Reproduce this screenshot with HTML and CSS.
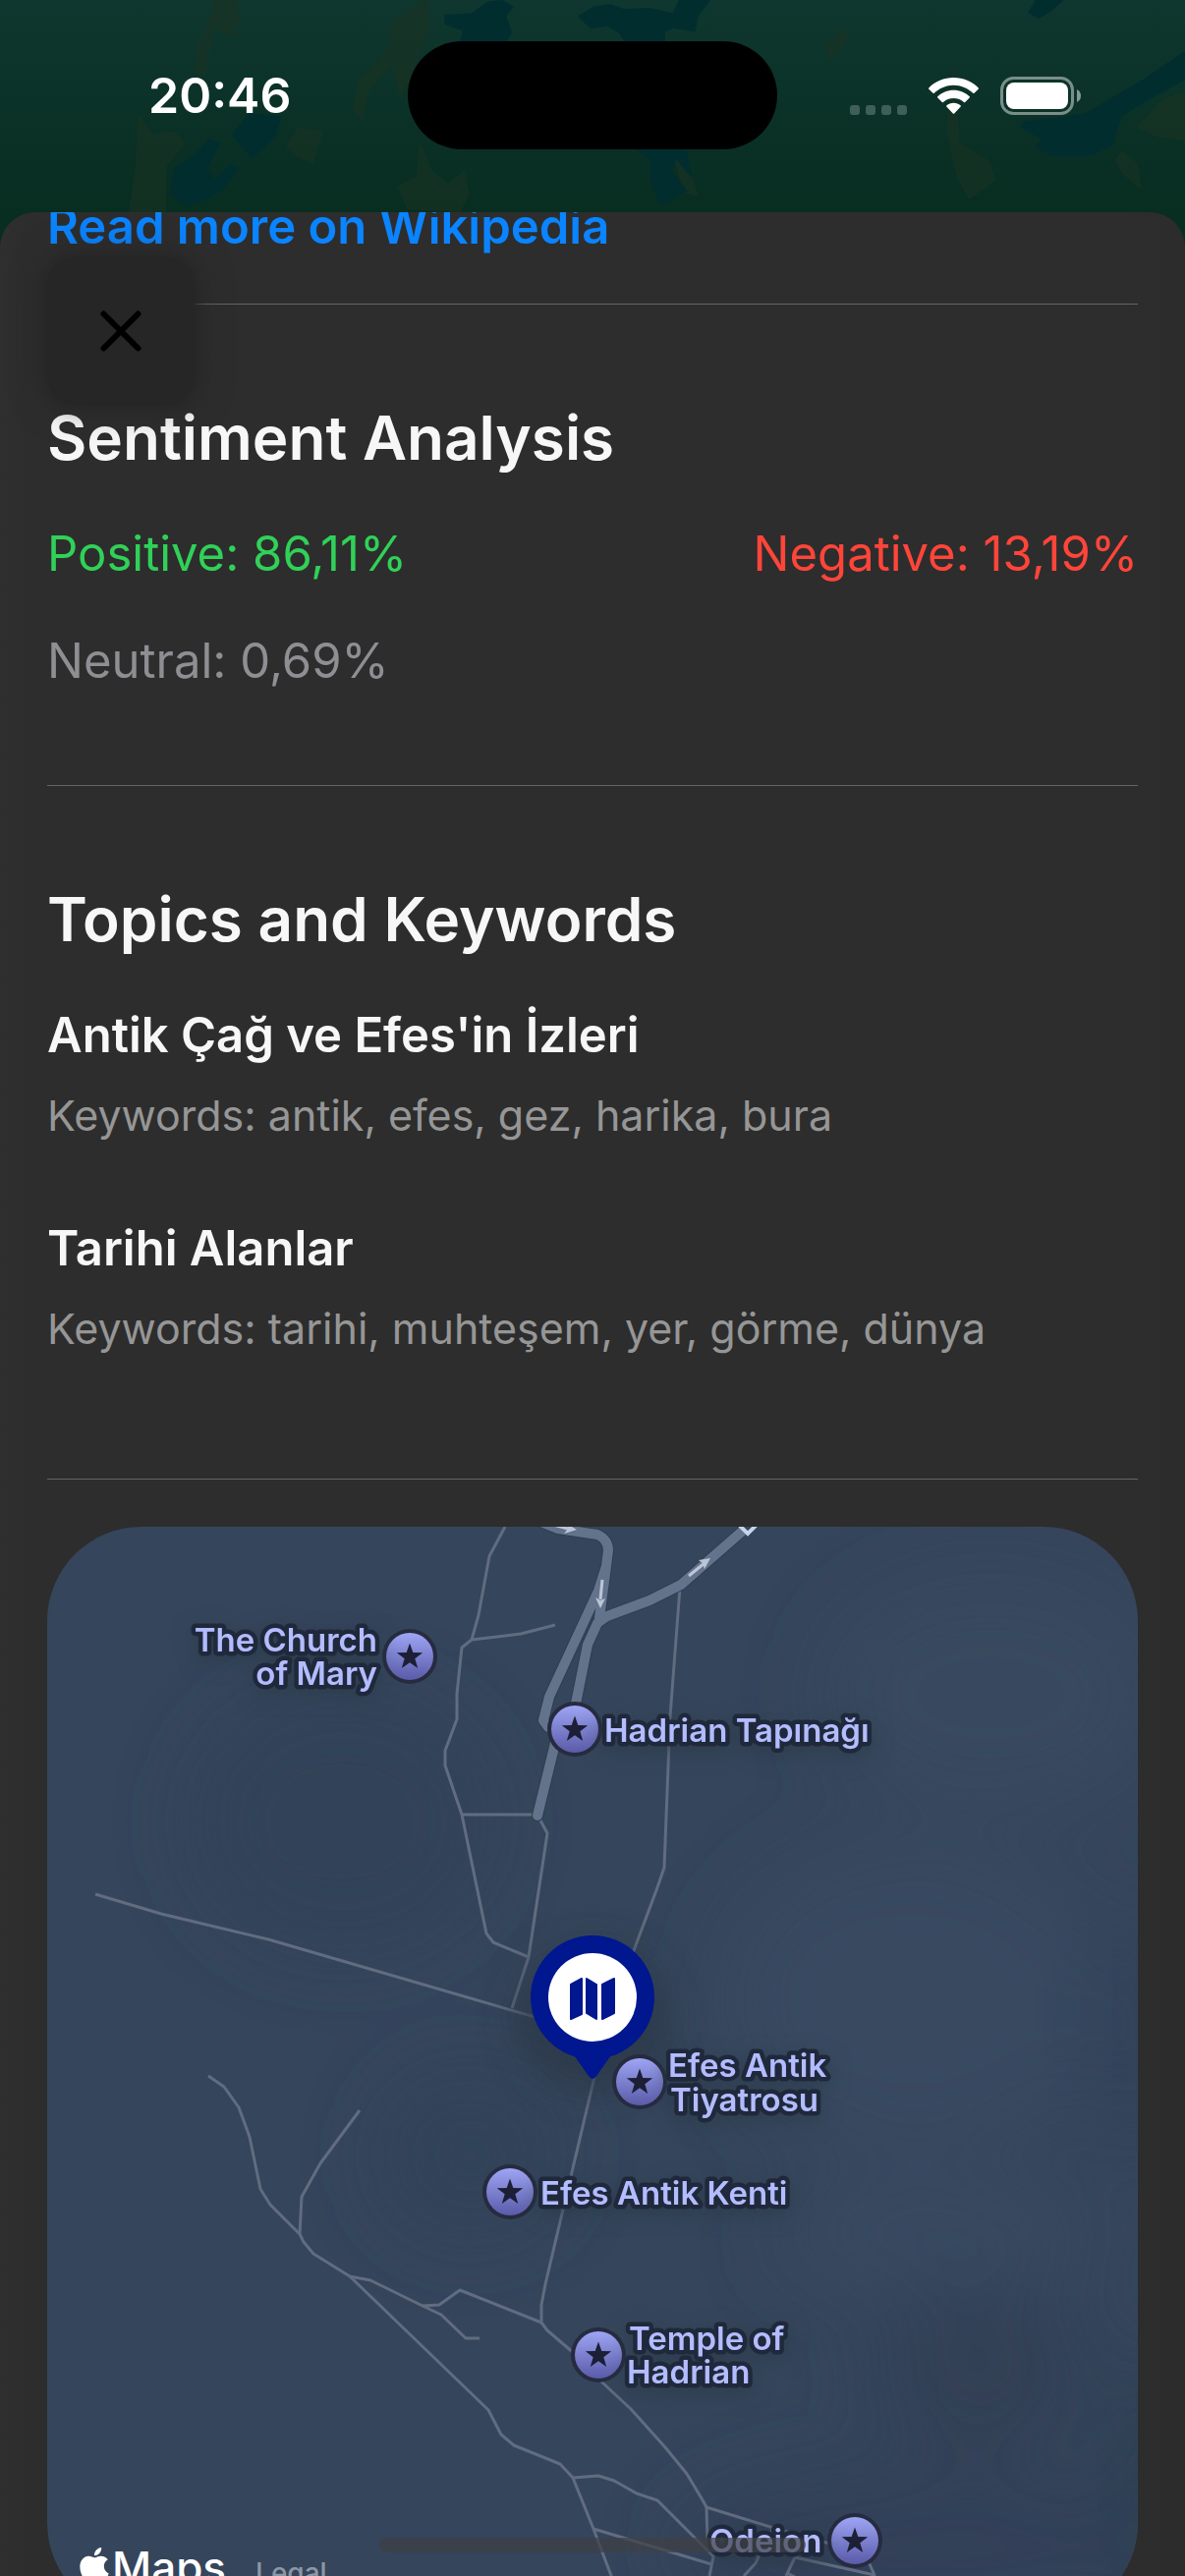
FILE: index.html
```html
<!DOCTYPE html>
<html lang="en">
<head>
<meta charset="utf-8">
<meta name="viewport" content="width=device-width, initial-scale=1">
<title>Efes</title>
<link rel="stylesheet" href="styles.css">
</head>
<body>
<div class="app">
  <header class="status-bar">
    <svg class="terrain" viewBox="0 0 1568 700" preserveAspectRatio="none" aria-hidden="true">
      <g fill="#1a3323" opacity=".6">
        <path d="M283 0h30l6 60-12 60-22-40-6 60-8 100-14-20 4-90 12-50z"/>
        <path d="M560 0h8v90l-20 130-18 80-12-100-30 80-8 90-14-40 10-90 22-50 20-60-2-60z"/>
        <path d="M1118 80l4 40-16 50-10 20-4-50z"/>
        <path d="M182 350l20 60 30-10 12 40-24 70v140h-50l10-140z"/>
        <path d="M395 390l33 10-14 100-20-20-16-30z"/>
        <path d="M555 430l16 90 22 40 22-40 6 70-12 60-70-10-14-70 26-30z"/>
        <path d="M1262 180l8 260 38 50 10 60-36 60-14-60-16-150z"/>
        <path d="M1540 300l28-20v150l-34-10-30-30zM1485 460l20 40 6 80-26-50-10-40z"/>
        <path d="M892 480l24 60 8 60-20-10z"/>
      </g>
      <g fill="#012d30" opacity=".9">
        <path d="M588 45l36-5 22-36 20-4 14 20-10 30 8 50-18 60h-55l7-65-24-20z"/>
        <path d="M764 50l20-30 24-8 18 16 34-4 30 16 8-40h42l-16 50-4 48-30-12-10 14v90l-40-6-20-80-16-24-22 8z"/>
        <path d="M1370 0h38l-20 40-14 18-14-20z"/>
        <path d="M1568 155v90l-44 55-40 56-12 90-30 32h-50l-22-28 8-24-28-36 4-20 54-14 30-12 44-60 30-40z"/>
        <path d="M330 345l42 10-6 60-32 72-28-76z"/>
        <path d="M275 424l18 10-18 80 10 38 18-48 14 10-22 64-20 30-28 24-22-40 6-80 28-40z"/>
        <path d="M840 456h68l8 90-22-60-4 40 20 60-36 42-12-66-2-70z"/>
      </g>
    </svg>
    <time class="clock">20:46</time>
    <div class="island"></div>
    <div class="indicators">
      <svg class="cell" viewBox="0 0 58 10" aria-label="No signal">
        <rect width="10" height="10" rx="3"/><rect x="16" width="10" height="10" rx="3"/><rect x="32" width="10" height="10" rx="3"/><rect x="48" width="10" height="10" rx="3"/>
      </svg>
      <svg class="wifi" viewBox="0 0 51 38" aria-label="Wi-Fi">
        <path d="M25.500 0C35 0 44.500 4 50.700 10.400q.6.700 0 1.300l-4.200 4.100q-.7.600-1.300 0C40 10.800 33 7.800 25.500 7.800S11 10.800 5.800 15.800q-.6.600-1.300 0L.3 11.700q-.6-.6 0-1.300C6.500 4 16 0 25.500 0z"/>
        <path d="M25.500 12.700c6.200 0 12 2.400 16.200 6.600q.6.600 0 1.200l-4.500 4.400q-.6.600-1.200 0c-2.800-2.600-6.500-4-10.500-4s-7.700 1.400-10.500 4q-.6.600-1.200 0l-4.500-4.400q-.6-.6 0-1.200c4.200-4.200 10-6.600 16.200-6.600z"/>
        <path d="M25.500 25.700c2.700 0 5.200 1 7.200 2.700q.6.600 0 1.200l-6.500 6.900q-.7.700-1.400 0l-6.500-6.900q-.6-.6 0-1.200c2-1.700 4.500-2.700 7.200-2.700z"/>
      </svg>
      <svg class="battery" viewBox="0 0 82 39" aria-label="Battery full">
        <rect x="1.500" y="1.500" width="72" height="36" rx="12" fill="none" stroke="#fff" stroke-opacity=".45" stroke-width="3"/>
        <rect x="6" y="6" width="63" height="27" rx="8" fill="#fff"/>
        <path d="M78 13q4 2 4 6.500T78 26z" fill="#fff" fill-opacity=".5"/>
      </svg>
    </div>
  </header>

  <main class="sheet">
    <button class="close" type="button" aria-label="Close">
      <svg viewBox="0 0 42 42" aria-hidden="true"><path d="M3.500 3.500l35 35M38.500 3.500l-35 35"/></svg>
    </button>

    <div class="content">
      <a class="wiki-link" href="#wikipedia">Read more on Wikipedia</a>
      <hr>
      <section class="section">
        <h2>Sentiment Analysis</h2>
        <div class="scores">
          <span class="positive">Positive: 86,11%</span>
          <span class="negative">Negative: 13,19%</span>
        </div>
        <p class="neutral">Neutral: 0,69%</p>
      </section>
      <hr>
      <section class="section">
        <h2>Topics and Keywords</h2>
        <article class="topic">
          <h3>Antik Çağ ve Efes'in İzleri</h3>
          <p>Keywords: antik, efes, gez, harika, bura</p>
        </article>
        <article class="topic">
          <h3>Tarihi Alanlar</h3>
          <p>Keywords: tarihi, muhteşem, yer, görme, dünya</p>
        </article>
      </section>
      <hr>

      <div class="map">
        <svg class="map-canvas" viewBox="0 0 1110 1110" role="img" aria-label="Map of Efes">
          <defs>
            <linearGradient id="pin-fill" x1="0" y1="0" x2="0" y2="1">
              <stop offset="0" stop-color="#9ea5f4"/><stop offset="1" stop-color="#5a5ba9"/>
            </linearGradient>
            <filter id="soft" x="-50%" y="-50%" width="200%" height="200%"><feGaussianBlur stdDeviation="40"/></filter>
            <filter id="halo" x="-50%" y="-50%" width="200%" height="200%"><feGaussianBlur stdDeviation="18"/></filter>
            <g id="poi">
              <circle r="28" fill="#262b3f"/>
              <circle r="24" fill="url(#pin-fill)"/>
              <path d="M0-13.500l3.300 9.500 9.900.2-7.900 6.100 2.900 9.600L0 6.200l-8.200 5.700 2.900-9.600-7.900-6.100 9.900-.2z" fill="#1c1f36"/>
            </g>
          </defs>
          <rect width="1110" height="1110" fill="#35455b"/>
          <g filter="url(#soft)">
            <ellipse cx="300" cy="300" rx="150" ry="130" fill="#334359"/>
            <ellipse cx="960" cy="170" rx="170" ry="120" fill="#38495f"/>
            <ellipse cx="880" cy="480" rx="200" ry="160" fill="#384960"/>
            <ellipse cx="900" cy="720" rx="160" ry="60" fill="#384a60"/>
            <ellipse cx="950" cy="860" rx="110" ry="90" fill="#304055"/>
            <ellipse cx="900" cy="1040" rx="260" ry="80" fill="#314158"/>
            <ellipse cx="1110" cy="520" rx="60" ry="120" fill="#30435a"/>
            <ellipse cx="430" cy="640" rx="90" ry="80" fill="#334359"/>
            <ellipse cx="1130" cy="1000" rx="60" ry="150" fill="#2f3f52"/>
          </g>

          <g class="trail">
            <path d="M466 0L450 30 439 90 432 115 422 123 417 170V196L405 228V243L422 293 447 414 454 423 490 438"/>
            <path d="M432 115L482 109 517 100"/>
            <path d="M422 293H499"/>
            <path d="M501 297L509 312 490 438 473 490"/>
            <path d="M49 374L116 394 225 420 510 503"/>
            <path d="M644 62L634 193 628 347 620 370 590 450"/>
            <path d="M557 560L507 771 503 792V810L509 818 537 842 566 872 594 898 629 937 651 964 666 989 671 998 672 1034 678 1048 674 1068"/>
            <path d="M164 559L180 570 195 591 206 621 217 674 227 690 257 720 261 728 271 740 308 763 449 899 462 924 475 935 522 954 535 968 556 1020 590 1110"/>
            <path d="M318 594L278 648 259 682 257 720"/>
            <path d="M308 763L329 767 382 793 401 802 426 826H440"/>
            <path d="M382 793L399 792 420 777 503 810"/>
            <path d="M535 968L561 966 577 971 600 984 621 991 678 1048"/>
            <path d="M556 1020L676 1056"/>
            <path d="M671 998L739 1019 800 1036"/>
            <path d="M739 1019L726 1044 721 1055 709 1068"/>
            <path d="M761 1049L752 1068M761 1049L842 1067 832 1045M753 1065L761 1069"/>
          </g>

          <g class="road road-edge">
            <path d="M505-4L520 2 560 8Q571 13 571 24L569 40 561 65 511 173 505 197 510 204M569 40L562 93"/>
            <path d="M708 4L645 59 613 75 570 91 560 98 550 120 538 180M520 208L499 294"/>
          </g>
          <g class="road">
            <path d="M505-4L520 2 560 8Q571 13 571 24L569 40 561 65 511 173 505 197 510 204M569 40L562 93"/>
            <path d="M708 4L645 59 613 75 570 91 560 98 550 120 538 180M520 208L499 294"/>
          </g>
          <g class="arrows">
            <path d="M565 54L563 74"/><path class="head" d="M558 72l5 3 5-2-5 10z"/>
            <path d="M653 50L669 37"/><path class="head" d="M663 34l4 3 2 6 6-11z"/>
            <path d="M515-2L530 2"/><path class="head" d="M529-3l1 5-4 5 13-4z"/>
          </g>
          <path d="M703-3l10 10 10-10" fill="#35455c" stroke="#c5d3ec" stroke-width="4"/>

          <ellipse cx="555" cy="500" rx="80" ry="76" fill="#2b3946" opacity=".75" filter="url(#halo)"/>

          <use href="#poi" x="369" y="132"/>
          <use href="#poi" x="537" y="206"/>
          <use href="#poi" x="603" y="565"/>
          <use href="#poi" x="471" y="677"/>
          <use href="#poi" x="561" y="843"/>
          <use href="#poi" x="822" y="1032"/>

          <g class="label">
            <text text-anchor="end"><tspan x="336" y="127">The Church</tspan><tspan x="336" y="161">of Mary</tspan></text>
            <text x="567" y="219">Hadrian Tapınağı</text>
            <text><tspan x="632" y="560">Efes Antik</tspan><tspan x="634" y="595">Tiyatrosu</tspan></text>
            <text x="502" y="690">Efes Antik Kenti</text>
            <text><tspan x="592" y="838">Temple of</tspan><tspan x="590" y="872">Hadrian</tspan></text>
            <text x="674" y="1044">Odeion</text>
          </g>

          <g>
            <path d="M536 538H574L559 559Q555 565 551 559z" fill="#00178f"/>
            <circle cx="555" cy="479" r="63" fill="#00178f"/>
            <circle cx="555" cy="479" r="45" fill="#fff"/>
            <g fill="#00178f" stroke="#00178f" stroke-width="2" stroke-linejoin="round">
              <path d="M533 466l11-6v36l-11 5z"/><path d="M549 460l10 6v35l-10-6z"/><path d="M565 466l12-6v35l-12 6z"/>
            </g>
          </g>
        </svg>
        <div class="attribution">
          <svg viewBox="0 0 24 24" aria-hidden="true"><path d="M12.152 6.896c-.948 0-2.415-1.078-3.960-1.040-2.040.027-3.910 1.183-4.961 3.014-2.117 3.675-.546 9.103 1.519 12.090 1.013 1.454 2.208 3.090 3.792 3.039 1.520-.065 2.090-.987 3.935-.987 1.831 0 2.350.987 3.960.948 1.637-.026 2.676-1.480 3.676-2.948 1.156-1.688 1.636-3.325 1.662-3.415-.039-.013-3.182-1.221-3.220-4.857-.026-3.040 2.480-4.494 2.597-4.559-1.429-2.090-3.623-2.324-4.390-2.376-2-.156-3.675 1.090-4.610 1.090zM15.530 3.830c.843-1.012 1.400-2.427 1.245-3.830-1.207.052-2.662.805-3.532 1.818-.780.896-1.454 2.338-1.273 3.714 1.338.104 2.715-.688 3.559-1.701"/></svg>
          <span class="brand">Maps</span>
          <a href="#legal">Legal</a>
        </div>
      </div>
    </div>
  </main>
  <div class="home-indicator"></div>
</div>
</body>
</html>
```
FILE: styles.css
```css
* {
  box-sizing: border-box;
  margin: 0;
}

body {
  background: #072d22;
  color: #f7f7f7;
  font-family: Inter, "Liberation Sans", sans-serif;
  font-size: 49px;
  line-height: 61px;
}

.app {
  position: relative;
  display: flex;
  flex-direction: column;
  height: 100vh;
  overflow: hidden;
  background: linear-gradient(#0f372f, #082d21 216px, #082d21);
}

/* Status bar */
.status-bar {
  display: grid;
  grid-template-columns: 1fr 376px 1fr;
  align-items: center;
  height: 216px;
  padding-bottom: 22px;
  flex: none;
}

.status-bar > * {
  position: relative;
}

.status-bar > .terrain {
  position: absolute;
  top: 0;
  left: 0;
  width: 100%;
  height: 233px;
}

.clock {
  padding-left: 151px;
  color: #fff;
  font-size: 50px;
  font-weight: 600;
}

.island {
  height: 110px;
  border-radius: 55px;
  background: #000;
}

.indicators {
  display: flex;
  justify-content: flex-end;
  align-items: flex-end;
  gap: 22px;
  padding-right: 106px;
}

.cell {
  width: 58px;
  height: 10px;
  fill: #3f5f58;
}

.wifi {
  width: 51px;
  height: 38px;
  fill: #fff;
}

.battery {
  width: 82px;
  height: 39px;
}

/* Sheet */
.sheet {
  position: relative;
  flex: 1;
  min-height: 0;
  overflow: hidden;
  border-radius: 36px 36px 0 0;
  background: linear-gradient(90deg, #2f2f2f, #2d2d2d 24px, #2d2d2d 1140px, #2c2c2d);
}

.close {
  position: absolute;
  z-index: 1;
  top: 46px;
  left: 48px;
  display: grid;
  place-items: center;
  width: 150px;
  height: 150px;
  padding: 0;
  border: 0;
  border-radius: 30px;
  background: #262626;
  box-shadow: 0 0 12px 2px #262626, 0 0 36px #26262699;
}

.close svg {
  width: 42px;
  height: 42px;
  stroke: #000;
  stroke-width: 6;
  stroke-linecap: round;
}

.content {
  display: flex;
  flex-direction: column;
  gap: 48px;
  margin-top: -16px;
  padding: 0 48px 48px;
}

.wiki-link {
  color: #0a84ff;
  font-weight: 600;
  text-decoration: none;
}

hr {
  width: 100%;
  height: 1px;
  border: 0;
  background: #656567;
}

.section {
  display: flex;
  flex-direction: column;
  gap: 48px;
  padding: 48px 0;
}

h2 {
  font-size: 62px;
  line-height: 79px;
  font-weight: 600;
}

.scores {
  display: flex;
  justify-content: space-between;
}

.positive {
  color: #30d158;
}

.negative {
  color: #ff453a;
}

.neutral {
  color: #8e8e93;
}

.topic {
  display: flex;
  flex-direction: column;
  gap: 24px;
  padding-bottom: 30px;
}

h3 {
  font-size: 49px;
  line-height: 61px;
  font-weight: 600;
}

.topic p {
  color: #969696;
  font-size: 43px;
  line-height: 54px;
}

/* Map */
.map {
  position: relative;
  overflow: hidden;
  border-radius: 96px;
}

.map-canvas {
  display: block;
  width: 100%;
}

.trail {
  fill: none;
  stroke: #616c80;
  stroke-width: 3;
  stroke-linejoin: round;
}

.road {
  fill: none;
  stroke: #63738b;
  stroke-width: 10;
  stroke-linecap: round;
  stroke-linejoin: round;
}

.road-edge {
  stroke: #2f3e52;
  stroke-width: 12;
}

.arrows {
  fill: none;
  stroke: #bcc6d8;
  stroke-width: 3;
}

.arrows .head {
  fill: #bcc6d8;
  stroke: none;
}

.label {
  fill: #b3bcff;
  stroke: #1f293b;
  stroke-width: 9;
  stroke-linejoin: round;
  paint-order: stroke;
  font-size: 33px;
  font-weight: 600;
  filter: drop-shadow(0 6px 10px #2a384699);
}

.attribution {
  position: absolute;
  bottom: 18px;
  left: 30px;
  display: flex;
  align-items: baseline;
  color: #fff;
  font-size: 44px;
  line-height: 54px;
  font-weight: 500;
}

.attribution svg {
  width: 36px;
  height: 36px;
  fill: #fff;
}

.attribution a {
  margin-left: 30px;
  color: #8d97a5;
  font-size: 28px;
  text-decoration: none;
}

.home-indicator {
  position: absolute;
  bottom: 24px;
  left: 50%;
  width: 434px;
  height: 15px;
  margin-left: -217px;
  border-radius: 8px;
  background: #3f4044;
  opacity: .7;
}
```
